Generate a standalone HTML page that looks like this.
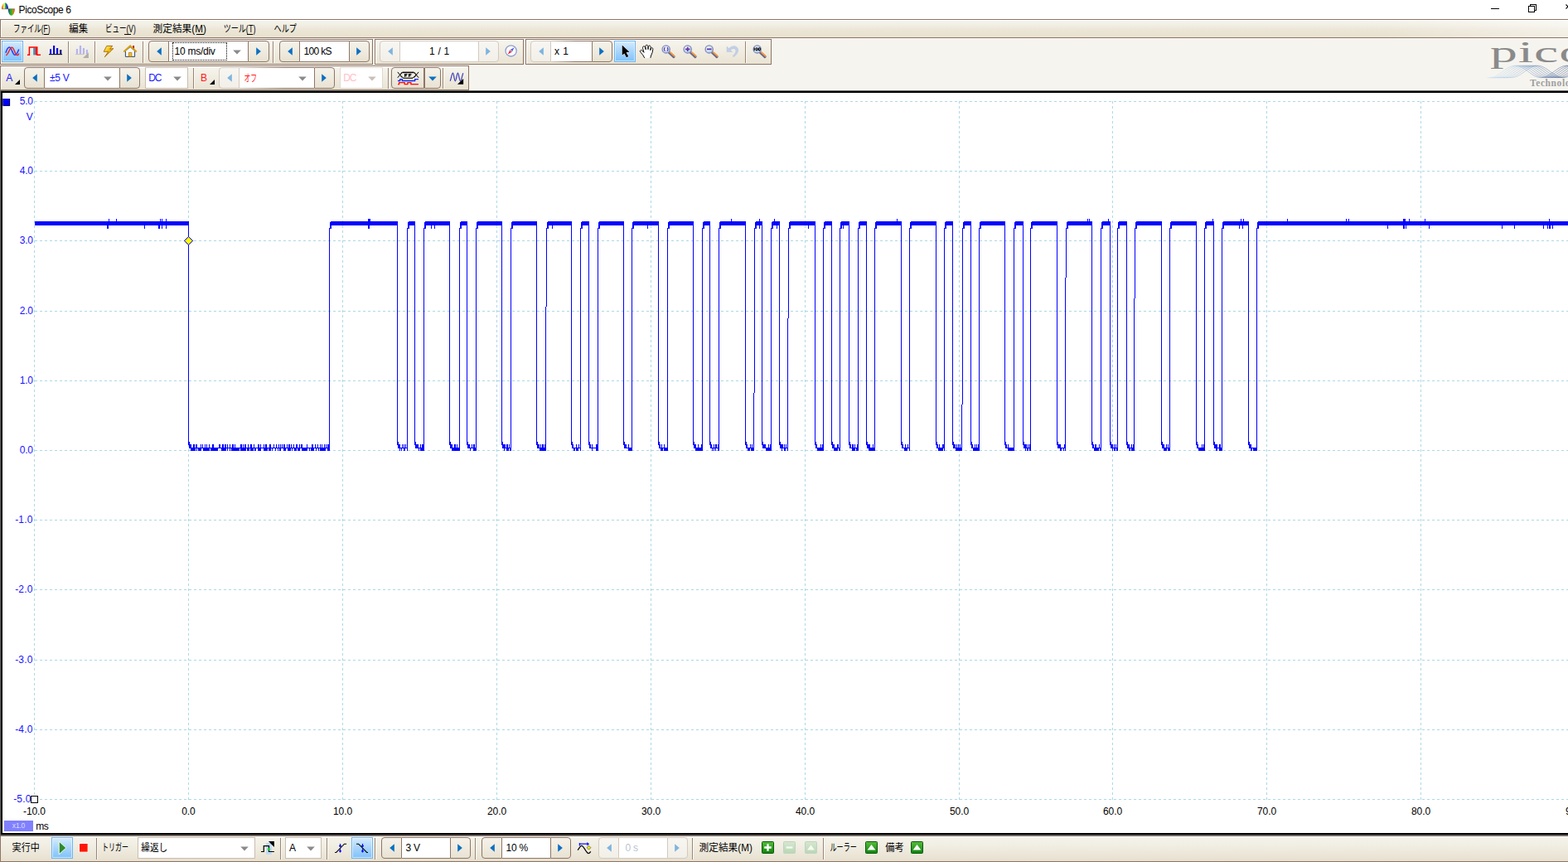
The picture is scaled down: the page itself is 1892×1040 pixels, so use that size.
<!DOCTYPE html><html><head><meta charset="utf-8"><title>PicoScope 6</title><style>*{margin:0;padding:0}
html,body{width:1892px;height:1040px;overflow:hidden;background:#fff}
body{font-family:"Liberation Sans",sans-serif;font-size:12px;color:#000;line-height:14px}
#app{position:relative;width:1892px;height:1040px;overflow:hidden}
#app>*{position:absolute}
svg{display:block;overflow:visible}
#title{left:0;top:0;width:1892px;height:23px;background:#fff}
#title>*{position:absolute}
.tt{left:22.6px;top:5px;font-size:12px;letter-spacing:-.4px;white-space:nowrap}
#menu{left:0;top:23px;width:1891px;height:21px;border:1px solid #8e7565;border-right:0;
 background:linear-gradient(to right,rgba(255,255,255,0) 88%,rgba(255,255,255,.45) 100%),linear-gradient(to bottom,#f6f4ed 0,#f1eee3 30%,#ece6d7 55%,#e9e2d0 88%,#eae6da 100%);box-shadow:inset 1px 1px 0 #fff}
.jp{pointer-events:none}
.jp text{font-family:"Liberation Sans","Noto Sans CJK JP",sans-serif;font-size:12px}
.ul{height:1px;background:#000}
#tbbg{left:0;top:46px;width:1892px;height:63px;background:#f6f4ef}
.tb{border:1px solid #8e7565;background:linear-gradient(to bottom,#f7f5ee 0,#f0ece1 50%,#e9e3d3 100%);box-shadow:inset 1px 1px 0 #fff}
.sep{width:1px;background:#9a8676;box-shadow:1px 0 0 #fbfaf7}
.sel{border:1px solid #6db6f2;background:linear-gradient(to bottom,#d4ebfd 0,#a8d5fb 50%,#7fc2fa 100%);box-shadow:inset 0 0 0 1px rgba(255,255,255,.55)}
.sbl,.sbr{border:1px solid #8f7767;background:linear-gradient(to bottom,#f5f2ea 0,#efebdf 50%,#e8e2d2 100%)}
.sbl{border-radius:4px 0 0 4px}.sbr{border-radius:0 4px 4px 0}
.sbl.d,.sbr.d{border-color:#d2cabf;background:linear-gradient(to bottom,#f8f6f2 0,#f2efe8 100%)}
.fld{background:#fff;border:1px solid #8f7767;border-left:0;border-right:0;white-space:nowrap;line-height:24px;letter-spacing:-.25px;font-size:12px;overflow:hidden}
.fld.fd{border-color:#d2cabf}
.fld.ld{border-image:linear-gradient(to right,#d2cabf 0,#8f7767 60%) 1}
.focus{border:1px dotted #000}
.ar,.ic{pointer-events:none}
.cb{border:1px solid #c9beb0;background:#fff;line-height:24px;white-space:nowrap;letter-spacing:-.25px;overflow:hidden}
.cb.dis{border-color:#e0d9ce}
.t{white-space:nowrap;line-height:14px}
#plot{left:0;top:109px;width:1892px;height:893px;background:#fff;border:3px solid #000;border-right:0;box-shadow:inset 0 0 0 0 #000}
#plotedge{left:0;top:109px;width:1892px;height:899px;border:1px solid #646464;border-right:0;box-sizing:border-box}
#plotsvg{left:0;top:0}
.yl{left:0;width:39.5px;text-align:right;color:#1a14ff;font-size:12px;letter-spacing:-.35px;line-height:14px;white-space:nowrap}
.xl{top:971.5px;width:60px;text-align:center;font-size:12px;line-height:14px;white-space:nowrap;letter-spacing:-.1px}
#zoomf{left:5px;top:990px;width:35px;height:13px;background:#8080ff;color:#dcdcff;font-size:8.5px;line-height:13px;text-align:center;letter-spacing:-.2px}
#status{left:0;top:1008px;width:1891px;height:30px;border-left:1px solid #8e7565;border-top:1px solid #7d6a5c;border-bottom:2px solid #8e7565;
 background:linear-gradient(to bottom,#f6f4ec 0,#efebdf 50%,#e7e0cf 100%);box-shadow:inset 0 1px 0 #fffefa}
#logo{left:1790px;top:46px;width:102px;height:62px;overflow:hidden}
#logo>*{position:absolute}
.pico{left:8.3px;top:-2px;font-family:"Liberation Serif",serif;font-size:35px;line-height:40px;color:#8a8a8a;transform:scaleX(1.88);transform-origin:0 0;letter-spacing:.5px}
.tech{left:56px;top:47px;font-family:"Liberation Serif",serif;font-weight:bold;font-size:11.5px;line-height:14px;color:#9e9e9e;letter-spacing:.6px;white-space:nowrap}
</style></head><body><div id="app"><div id="title"><svg class="ic" style="left:2px;top:3px" width="17" height="17" viewBox="0 0 17 17"><defs><linearGradient id="ga" x1="0" x2="1"><stop offset="0" stop-color="#d80808"/><stop offset=".22" stop-color="#f0c818"/><stop offset=".4" stop-color="#eef8c8"/><stop offset=".56" stop-color="#38b430"/><stop offset=".82" stop-color="#1830c8"/><stop offset="1" stop-color="#101890"/></linearGradient><linearGradient id="gb" x1="0" x2="1"><stop offset="0" stop-color="#1020a8"/><stop offset=".3" stop-color="#20a828"/><stop offset=".6" stop-color="#50b020"/><stop offset=".8" stop-color="#d09010"/><stop offset="1" stop-color="#d81010"/></linearGradient></defs><path d="M0.1 7.8A3.95 7.6 0 0 1 8 7.8z" fill="url(#ga)"/><path d="M7.8 7.8A3.95 8 0 0 0 15.7 7.8z" fill="url(#gb)"/><path d="M0.1 7.8H15.7" stroke="#503030" stroke-width=".6" opacity=".8"/></svg><span class="tt">PicoScope 6</span><svg class="ic" style="left:1790px;top:0" width="102" height="23" viewBox="0 0 102 23" shape-rendering="crispEdges"><path d="M9 10.5h10" stroke="#000" stroke-width="1" fill="none"/><path d="M54.5 7.5h7v7h-7z M56.5 7.5v-2h7v7h-2" stroke="#000" stroke-width="1" fill="none"/><path d="M99.5 5.5l5 5m0 -5l-5 5" stroke="#000" stroke-width="1.1" fill="none" shape-rendering="auto"/></svg></div><div id="menu"></div><svg class="jp" style="left:15.2px;top:25px" width="49" height="20" viewBox="0 -14 49 20"><text x="1" y="0" fill="#000" textLength="44.6" lengthAdjust="spacingAndGlyphs">ファイル(F)</text></svg><svg class="jp" style="left:82.6px;top:25px" width="26" height="20" viewBox="0 -14 26 20"><text x="0.3" y="0" fill="#000" textLength="22.8" lengthAdjust="spacingAndGlyphs">編集</text></svg><svg class="jp" style="left:125.5px;top:25px" width="41" height="20" viewBox="0 -14 41 20"><text x="1" y="0" fill="#000" textLength="36.7" lengthAdjust="spacingAndGlyphs">ビュー(V)</text></svg><svg class="jp" style="left:184.2px;top:25px" width="68" height="20" viewBox="0 -14 68 20"><text x="0.5" y="0" fill="#000" textLength="64.3" lengthAdjust="spacingAndGlyphs">測定結果(M)</text></svg><svg class="jp" style="left:269px;top:25px" width="43" height="20" viewBox="0 -14 43 20"><text x="0.8" y="0" fill="#000" textLength="38.6" lengthAdjust="spacingAndGlyphs">ツール(T)</text></svg><svg class="jp" style="left:330px;top:25px" width="31" height="20" viewBox="0 -14 31 20"><text x="0.6" y="0" fill="#000" textLength="27.3" lengthAdjust="spacingAndGlyphs">ヘルプ</text></svg><i class="ul" style="left:52.5px;top:41px;width:6px"></i><i class="ul" style="left:150px;top:41px;width:7.5px"></i><i class="ul" style="left:236.5px;top:41px;width:9.5px"></i><i class="ul" style="left:298px;top:41px;width:6.5px"></i><div id="tbbg"></div><div class="tb" style="left:0;top:47px;width:448px;height:29px"></div><div class="tb" style="left:452px;top:47px;width:178px;height:29px"></div><div class="tb" style="left:634px;top:47px;width:295px;height:29px"></div><div class="tb" style="left:0;top:79px;width:564px;height:28px"></div><div class="sel" style="left:2px;top:49px;width:24px;height:24px"></div><svg class="ic" style="left:5px;top:54px" width="20" height="16" viewBox="0 0 20 16"><path d="M1.9 9.7C3.2 5.5 4.8 3 6.4 3C9 3 10.2 12.3 12.8 12.3C14.8 12.3 16.4 9 17.8 5.4" fill="none" stroke="#2a3cf0" stroke-width="1.5"/><path d="M2.1 12.6C5 12.6 6.4 3.3 9.3 3.3C12.2 3.3 13 12.6 15.9 12.6C16.8 12.6 17.4 11.6 17.8 10.4" fill="none" stroke="#f02020" stroke-width="1.5"/></svg><svg class="ic" style="left:33px;top:55px" width="16" height="13" viewBox="0 0 16 13"><defs><linearGradient id="gp" x1="0" x2="1"><stop offset="0" stop-color="#28c0f0"/><stop offset="1" stop-color="#e81818"/></linearGradient></defs><rect x="7" y="2.6" width="4.4" height="8.8" fill="url(#gp)"/><path d="M0 11.3H2.4V2H11.7V11.3H16" fill="none" stroke="#ff0000" stroke-width="1.5"/></svg><svg class="ic" style="left:59px;top:54px" width="16" height="13" viewBox="0 0 16 13"><defs><linearGradient id="gbar" x1="0" x2="1"><stop offset="0" stop-color="#0010ff"/><stop offset=".55" stop-color="#0000e0"/><stop offset="1" stop-color="#000070"/></linearGradient></defs><path fill="#fff8d8" opacity=".8" d="M.4 4.6h3.3v7h-3.3zM4.4 .5h3.4v11h-3.4zM8.4 3.4h3.4v8h-3.4zM12.5 5.5h3.4v6h-3.4z"/><path fill="url(#gbar)" d="M1 5.2h2.1v6.3h-2.1zM5 1.1h2.2v10.4h-2.2zM9 4h2.2v7.5h-2.2zM13.1 6.1h2.2v5.4h-2.2z"/><path d="M0 11.6H16" stroke="#101020" stroke-width="1.1"/></svg><i class="sep" style="left:82px;top:50px;height:26px"></i><svg class="ic" style="left:91px;top:54px" width="17" height="16" viewBox="0 0 17 16"><path fill="#b4b4f0" d="M.9 4.9h2.1v6.5h-2.1zM4.9 .9h2.2v10.5h-2.2zM8.9 3.9h2.1v7.5h-2.1zM12.9 6h2v5.4h-2z"/><path d="M0 11.6H10" stroke="#c8c4bc" stroke-width="1"/><path d="M15.9 9.2V15.9H9z" fill="#b2aea6"/></svg><i class="sep" style="left:114px;top:50px;height:26px"></i><svg class="ic" style="left:124px;top:54px" width="14" height="16" viewBox="0 0 14 16"><defs><linearGradient id="gbo" x1="0" y1="0" x2="1" y2="1"><stop offset="0" stop-color="#fff8c0"/><stop offset=".4" stop-color="#f8c818"/><stop offset="1" stop-color="#c07800"/></linearGradient></defs><path d="M4.8 1.4H11.7L8.6 5.2L12.9 4.5L2.4 14.7L6.7 8.3H1.2z" fill="url(#gbo)" stroke="#a06800" stroke-width=".9" stroke-linejoin="round"/></svg><svg class="ic" style="left:149px;top:54px" width="17" height="16" viewBox="0 0 17 16"><path d="M11.2 1.1h1.8v3.8h-1.8z" fill="#c00018"/><path d="M11.2 3.6h1.8v1.6h-1.8z" fill="#181818"/><path d="M2.4 7.5L8.1 2.6L13.6 7.5V14.4H2.4z" fill="#f4f8ff" stroke="#34465e" stroke-width="1"/><path d="M0.3 8.6L8.1 1.3L15.8 8.6" fill="none" stroke="#d8a010" stroke-width="2" stroke-linejoin="miter"/><path d="M6.4 9.4h3.4v4.8h-3.4z" fill="#f0c030" stroke="#b07a08" stroke-width=".8"/></svg><i class="sep" style="left:172px;top:50px;height:26px"></i><b class="sbl" style="left:179px;top:49px;width:23px;height:24px"></b><b class="sbr" style="left:299px;top:49px;width:24px;height:24px"></b><span class="fld" style="left:204px;top:49px;width:95px;height:24px;color:#000;text-indent:6.5px;">10 ms/div</span><svg class="ar" style="left:188.5px;top:56.6px" width="6" height="10" viewBox="0 0 6 10"><path fill="#0a6fc2" d="M5.8 0.3V9.7L0.2 5z"/></svg><svg class="ar" style="left:309.2px;top:56.6px" width="6" height="10" viewBox="0 0 6 10"><path fill="#0a6fc2" d="M0.2 0.3V9.7L5.8 5z"/></svg><svg class="ar" style="left:280.5px;top:59.5px" width="10" height="6" viewBox="0 0 10 6"><path fill="#8a8a8a" d="M0.2 0.4H9.8L5 5.6z"/></svg><div class="focus" style="left:208px;top:51px;width:64px;height:20px"></div><i class="sep" style="left:329px;top:50px;height:26px"></i><b class="sbl" style="left:337px;top:49px;width:23px;height:24px"></b><b class="sbr" style="left:421px;top:49px;width:23px;height:24px"></b><span class="fld" style="left:362px;top:49px;width:59px;height:24px;color:#000;text-indent:4.5px;letter-spacing:-0.65px;">100 kS</span><svg class="ar" style="left:346.5px;top:56.6px" width="6" height="10" viewBox="0 0 6 10"><path fill="#0a6fc2" d="M5.8 0.3V9.7L0.2 5z"/></svg><svg class="ar" style="left:430.2px;top:56.6px" width="6" height="10" viewBox="0 0 6 10"><path fill="#0a6fc2" d="M0.2 0.3V9.7L5.8 5z"/></svg><b class="sbl d" style="left:458px;top:49px;width:23px;height:24px"></b><b class="sbr d" style="left:577px;top:49px;width:23px;height:24px"></b><span class="fld fd" style="left:483px;top:49px;width:94px;height:24px;color:#000;text-align:center;word-spacing:1px;">1 / 1</span><svg class="ar" style="left:467.5px;top:56.6px" width="6" height="10" viewBox="0 0 6 10"><path fill="#7db4e0" d="M5.8 0.3V9.7L0.2 5z"/></svg><svg class="ar" style="left:586.2px;top:56.6px" width="6" height="10" viewBox="0 0 6 10"><path fill="#7db4e0" d="M0.2 0.3V9.7L5.8 5z"/></svg><svg class="ic" style="left:609px;top:54px" width="16" height="16" viewBox="0 0 16 16"><circle cx="7.6" cy="7.4" r="6.6" fill="#fdfdff" stroke="#8ea0d0" stroke-width="1.3"/><path d="M11.6 3.2L8.8 8.6L6.5 6.3z" fill="#4058e0"/><path d="M3.7 11.6L6.5 6.3L8.8 8.6z" fill="#e81828"/><circle cx="7.6" cy="7.4" r=".8" fill="#fff"/></svg><b class="sbl d" style="left:640px;top:49px;width:23px;height:24px"></b><b class="sbr" style="left:714px;top:49px;width:23px;height:24px"></b><span class="fld ld" style="left:665px;top:49px;width:49px;height:24px;color:#000;text-indent:4px;word-spacing:1.5px;">x 1</span><svg class="ar" style="left:649.5px;top:56.6px" width="6" height="10" viewBox="0 0 6 10"><path fill="#7db4e0" d="M5.8 0.3V9.7L0.2 5z"/></svg><svg class="ar" style="left:723.2px;top:56.6px" width="6" height="10" viewBox="0 0 6 10"><path fill="#0a6fc2" d="M0.2 0.3V9.7L5.8 5z"/></svg><div class="sel" style="left:741px;top:49px;width:24px;height:24px"></div><svg class="ic" style="left:750px;top:54px" width="11" height="16" viewBox="0 0 11 16"><path d="M0.7 0.4V12.8L3.3 10.4L5.9 15.2L8.3 14L5.6 9.2L9.5 8.8z" fill="#000" stroke="#fff" stroke-width=".9" paint-order="stroke"/></svg><svg class="ic" style="left:771px;top:54px" width="17" height="17" viewBox="0 0 17 17"><path d="M6.8 15.9L4.6 12.2L2.4 9.6L1.3 7.7C1.5 6.6 2.4 6.2 3.2 6.6L5.2 8.4L6 9.3L4.6 4.4C4.3 3 4.8 2.1 5.7 1.9C6.6 1.7 7.2 2.4 7.5 3.4L8.2 5.8L7.9 1.9C8 0.8 8.6 0.3 9.4 0.3C10.3 0.3 10.8 0.9 10.9 1.9L11 5.6L11.4 2.3C11.6 1.4 12.2 1 12.9 1.1C13.7 1.2 14.2 1.9 14.1 2.8L13.8 6.6L14.5 4.6C14.8 3.8 15.4 3.5 16 3.7C16.7 3.9 16.9 4.6 16.8 5.4L16.2 9.2L14.6 13L13.8 15.9" fill="#fff" stroke="#000" stroke-width=".95" stroke-linejoin="round"/></svg><svg class="ic" style="left:798px;top:54px" width="17" height="17" viewBox="0 0 17 17"><defs><radialGradient id="gm" cx=".4" cy=".35" r=".7"><stop offset="0" stop-color="#f4fbff"/><stop offset="1" stop-color="#a8d0f4"/></radialGradient></defs><path d="M9.2 9.1L15 14.5" stroke="#66668e" stroke-width="3.2" stroke-linecap="round"/><path d="M10.2 8.6L15.7 13.7" stroke="#f29a3a" stroke-width="1.8" stroke-linecap="round"/><circle cx="5.7" cy="5.4" r="4.6" fill="url(#gm)" stroke="#8688b8" stroke-width="1.3"/><path d="M4.5 3.2C3.1 4.2 3.1 6.6 4.5 7.6M6.9 3.2C8.3 4.2 8.3 6.6 6.9 7.6" fill="none" stroke="#5a2898" stroke-width="1.1"/></svg><svg class="ic" style="left:824px;top:54px" width="17" height="17" viewBox="0 0 17 17"><defs><radialGradient id="gm" cx=".4" cy=".35" r=".7"><stop offset="0" stop-color="#f4fbff"/><stop offset="1" stop-color="#a8d0f4"/></radialGradient></defs><path d="M9.2 9.1L15 14.5" stroke="#66668e" stroke-width="3.2" stroke-linecap="round"/><path d="M10.2 8.6L15.7 13.7" stroke="#f29a3a" stroke-width="1.8" stroke-linecap="round"/><circle cx="5.7" cy="5.4" r="4.6" fill="url(#gm)" stroke="#8688b8" stroke-width="1.3"/><path d="M3 5.4H8.4M5.7 2.7V8.1" stroke="#6430a0" stroke-width="1.6"/></svg><svg class="ic" style="left:850px;top:54px" width="17" height="17" viewBox="0 0 17 17"><defs><radialGradient id="gm" cx=".4" cy=".35" r=".7"><stop offset="0" stop-color="#f4fbff"/><stop offset="1" stop-color="#a8d0f4"/></radialGradient></defs><path d="M9.2 9.1L15 14.5" stroke="#66668e" stroke-width="3.2" stroke-linecap="round"/><path d="M10.2 8.6L15.7 13.7" stroke="#f29a3a" stroke-width="1.8" stroke-linecap="round"/><circle cx="5.7" cy="5.4" r="4.6" fill="url(#gm)" stroke="#8688b8" stroke-width="1.3"/><path d="M3 5.3H8.5" stroke="#6430a0" stroke-width="1.7"/></svg><svg class="ic" style="left:876px;top:54px" width="16" height="16" viewBox="0 0 16 16"><path d="M1.1 2.3V8.5H7.5L5.4 6.4C7 4.6 9.6 4 11.2 5.4C12.8 7 11.6 10.6 8 13.6L9.4 14.6C14.4 11 16 6.4 13.6 3.4C11.2 0.6 6.4 1.2 3.6 4.6z" fill="#c2cfe8" stroke="#b4c2de" stroke-width=".5"/></svg><i class="sep" style="left:899px;top:50px;height:26px"></i><svg class="ic" style="left:908px;top:54px" width="17" height="17" viewBox="0 0 17 17"><defs><radialGradient id="gm" cx=".4" cy=".35" r=".7"><stop offset="0" stop-color="#f4fbff"/><stop offset="1" stop-color="#a8d0f4"/></radialGradient></defs><path d="M9.2 9.1L15 14.5" stroke="#66668e" stroke-width="3.2" stroke-linecap="round"/><path d="M10.2 8.6L15.7 13.7" stroke="#f29a3a" stroke-width="1.8" stroke-linecap="round"/><circle cx="5.7" cy="5.4" r="4.6" fill="url(#gm)" stroke="#8688b8" stroke-width="1.3"/><path d="M2.2 3.6V7M3.9 5.3a1.1 1.6 0 1 0 2.2 0a1.1 1.6 0 1 0 -2.2 0M7.2 5.3a1.1 1.6 0 1 0 2.2 0a1.1 1.6 0 1 0 -2.2 0" stroke="#000" stroke-width="1.1" fill="none"/></svg><span class="t" style="left:7.3px;top:86.5px;color:#1a1aff;font-size:12px">A</span><svg class="ic" style="left:18px;top:96px" width="6" height="6"><path d="M6 0V6H0z" fill="#000"/></svg><b class="sbl" style="left:29px;top:81px;width:23px;height:24px"></b><b class="sbr" style="left:144px;top:81px;width:23px;height:24px"></b><span class="fld" style="left:54px;top:81px;width:90px;height:24px;color:#1a1aff;text-indent:6px;">&#177;5 V</span><svg class="ar" style="left:38.5px;top:88.6px" width="6" height="10" viewBox="0 0 6 10"><path fill="#0a6fc2" d="M5.8 0.3V9.7L0.2 5z"/></svg><svg class="ar" style="left:153.2px;top:88.6px" width="6" height="10" viewBox="0 0 6 10"><path fill="#0a6fc2" d="M0.2 0.3V9.7L5.8 5z"/></svg><svg class="ar" style="left:125px;top:91.5px" width="10" height="6" viewBox="0 0 10 6"><path fill="#8a8a8a" d="M0.2 0.4H9.8L5 5.6z"/></svg><div class="cb" style="left:175px;top:81px;width:50px;height:24px;color:#1a1aff;text-indent:3.2px;letter-spacing:-1.2px">DC</div><svg class="ar" style="left:209px;top:91.5px" width="10" height="6" viewBox="0 0 10 6"><path fill="#8a8a8a" d="M0.2 0.4H9.8L5 5.6z"/></svg><i class="sep" style="left:233px;top:82px;height:25px"></i><span class="t" style="left:242px;top:86.5px;color:#ff1a1a;font-size:12px">B</span><svg class="ic" style="left:253px;top:96px" width="6" height="6"><path d="M6 0V6H0z" fill="#000"/></svg><b class="sbl d" style="left:264px;top:81px;width:23px;height:24px"></b><b class="sbr" style="left:379px;top:81px;width:23px;height:24px"></b><span class="fld ld" style="left:289px;top:81px;width:90px;height:24px;color:#000;text-indent:6px;"></span><svg class="ar" style="left:273.5px;top:88.6px" width="6" height="10" viewBox="0 0 6 10"><path fill="#7db4e0" d="M5.8 0.3V9.7L0.2 5z"/></svg><svg class="ar" style="left:388.2px;top:88.6px" width="6" height="10" viewBox="0 0 6 10"><path fill="#0a6fc2" d="M0.2 0.3V9.7L5.8 5z"/></svg><svg class="ar" style="left:359.5px;top:91.5px" width="10" height="6" viewBox="0 0 10 6"><path fill="#8a8a8a" d="M0.2 0.4H9.8L5 5.6z"/></svg><svg class="jp" style="left:294.2px;top:84.5px" width="19" height="20" viewBox="0 -14 19 20"><text x="0.5" y="0" fill="#ff1a1a" textLength="15.5" lengthAdjust="spacingAndGlyphs">オフ</text></svg><div class="cb dis" style="left:410px;top:81px;width:50px;height:24px;color:#ffc0c8;text-indent:3.2px;letter-spacing:-1.2px">DC</div><svg class="ar" style="left:444px;top:91.5px" width="10" height="6" viewBox="0 0 10 6"><path fill="#c8c0b8" d="M0.2 0.4H9.8L5 5.6z"/></svg><i class="sep" style="left:468px;top:82px;height:25px"></i><b class="sbl" style="left:472px;top:81px;width:38px;height:24px"></b><b class="sbr" style="left:512px;top:81px;width:18px;height:24px"></b><svg class="ic" style="left:479px;top:86px" width="27" height="17" viewBox="0 0 27 17"><path d="M1 11.5H3.7V9.6H6.3V11.5H21.7V9.6H25.9" stroke="#fff8d0" stroke-width="2.6" fill="none" opacity=".7"/><path d="M0.8 0.9L6.3 7.8M0.8 7.8L6.3 0.9M20.6 0.9L26.1 7.8M20.6 7.8L26.1 0.9" stroke="#000" stroke-width="1" fill="none"/><path d="M3.5 4.4L7.1 1.2M3.5 4.4L7.9 8.3M23.3 4.4L19.8 1.2M23.3 4.4L18.7 8.3" stroke="#000" stroke-width=".9" fill="none"/><path d="M6.8 1.4H20.1" stroke="#000" stroke-width="1.5" fill="none"/><path d="M7.6 8.2H19" stroke="#000" stroke-width="1.1" fill="none"/><path d="M9.6 6.7V3.6H12.5M9.6 5.2H11.9M14.5 6.7V3.6H17.4M14.5 5.2H16.8" stroke="#000" stroke-width="1.15" fill="none"/><path d="M1 11.5H3.7V9.6H6.3V11.5H21.7V9.6H25.9" stroke="#0820ff" stroke-width="1.3" fill="none"/><path d="M1 15.7H2.6V13.6H9.2V15.7H12.9V13.6H16.9V15.7H25.9" stroke="#ff0808" stroke-width="1.3" fill="none"/></svg><svg class="ar" style="left:516.6px;top:92px" width="10" height="6" viewBox="0 0 10 6"><path fill="#0a6fc2" d="M0.2 0.4H9.8L5 5.6z"/></svg><i class="sep" style="left:534px;top:82px;height:25px"></i><svg class="ic" style="left:542px;top:87px" width="18" height="16" viewBox="0 0 18 16"><path d="M1.2 10.8C2.4 7.5 3.4 1.2 4.4 1.2C5.6 1.2 6.2 10.8 7.3 10.8C8.5 10.8 9.3 1.2 10.4 1.2C11.6 1.2 12.3 10.8 13.4 10.8C14.6 10.8 15.6 4.5 16.8 1.2" fill="none" stroke="#3a3ab8" stroke-width="1.2"/><path d="M17.1 8.1V14.7H9.9z" fill="#000"/></svg><div id="plot"></div><div id="plotedge"></div><svg id="plotsvg" width="1892" height="1040" viewBox="0 0 1892 1040" shape-rendering="crispEdges"><g stroke="#add8e6" stroke-width="1" stroke-dasharray="3 3" fill="none"><path d="M41.5 122V965"/><path d="M227.5 122V965"/><path d="M413.5 122V965"/><path d="M599.5 122V965"/><path d="M785.5 122V965"/><path d="M971.5 122V965"/><path d="M1157.5 122V965"/><path d="M1342.5 122V965"/><path d="M1528.5 122V965"/><path d="M1714.5 122V965"/><path d="M42 122.5H1892"/><path d="M42 206.5H1892"/><path d="M42 290.5H1892"/><path d="M42 375.5H1892"/><path d="M42 459.5H1892"/><path d="M42 543.5H1892"/><path d="M42 627.5H1892"/><path d="M42 711.5H1892"/><path d="M42 796.5H1892"/><path d="M42 880.5H1892"/><path d="M42 964.5H1892"/></g><path fill="#0000ff" d="M42 267h186v5h-186zM227 267h1v270h-1zM228 533h1v4h-1zM228 536h1v5h-1zM229 536h1v5h-1zM230 536h1v8h-1zM231 540h1v4h-1zM232 540h1v4h-1zM233 536h1v8h-1zM234 536h1v8h-1zM235 540h1v4h-1zM236 536h1v5h-1zM237 536h1v8h-1zM238 540h1v1h-1zM239 540h1v4h-1zM240 540h1v4h-1zM241 540h1v4h-1zM242 536h1v8h-1zM243 540h1v1h-1zM244 536h1v5h-1zM245 540h1v4h-1zM246 540h1v4h-1zM247 536h1v8h-1zM248 540h1v4h-1zM249 536h1v8h-1zM250 540h1v4h-1zM251 540h1v4h-1zM252 536h1v8h-1zM253 540h1v1h-1zM254 540h1v4h-1zM255 540h1v4h-1zM256 536h1v8h-1zM257 536h1v8h-1zM258 540h1v4h-1zM259 540h1v4h-1zM260 540h1v4h-1zM261 540h1v4h-1zM262 540h1v4h-1zM263 540h1v1h-1zM264 536h1v5h-1zM265 536h1v5h-1zM266 540h1v1h-1zM267 540h1v4h-1zM268 536h1v8h-1zM269 536h1v8h-1zM270 540h1v4h-1zM271 536h1v8h-1zM272 536h1v8h-1zM273 540h1v1h-1zM274 536h1v8h-1zM275 540h1v1h-1zM276 540h1v1h-1zM277 536h1v8h-1zM278 540h1v1h-1zM279 540h1v4h-1zM280 536h1v8h-1zM281 536h1v8h-1zM282 540h1v4h-1zM283 536h1v8h-1zM284 540h1v4h-1zM285 540h1v4h-1zM286 540h1v4h-1zM287 540h1v4h-1zM288 540h1v4h-1zM289 540h1v1h-1zM290 536h1v8h-1zM291 536h1v8h-1zM292 540h1v4h-1zM293 536h1v8h-1zM294 540h1v4h-1zM295 536h1v8h-1zM296 536h1v8h-1zM297 540h1v1h-1zM298 540h1v4h-1zM299 536h1v8h-1zM300 540h1v4h-1zM301 540h1v1h-1zM302 536h1v8h-1zM303 536h1v8h-1zM304 540h1v4h-1zM305 540h1v4h-1zM306 536h1v5h-1zM307 540h1v4h-1zM308 540h1v4h-1zM309 540h1v1h-1zM310 540h1v1h-1zM311 536h1v8h-1zM312 536h1v8h-1zM313 540h1v4h-1zM314 536h1v8h-1zM315 540h1v1h-1zM316 540h1v1h-1zM317 540h1v1h-1zM318 536h1v8h-1zM319 540h1v4h-1zM320 536h1v8h-1zM321 536h1v8h-1zM322 540h1v4h-1zM323 540h1v1h-1zM324 540h1v4h-1zM325 536h1v8h-1zM326 536h1v8h-1zM327 540h1v1h-1zM328 540h1v4h-1zM329 540h1v1h-1zM330 536h1v5h-1zM331 540h1v1h-1zM332 540h1v4h-1zM333 536h1v5h-1zM334 540h1v1h-1zM335 540h1v4h-1zM336 536h1v5h-1zM337 540h1v4h-1zM338 536h1v8h-1zM339 540h1v1h-1zM340 536h1v5h-1zM341 540h1v1h-1zM342 536h1v8h-1zM343 536h1v8h-1zM344 540h1v4h-1zM345 540h1v1h-1zM346 536h1v5h-1zM347 540h1v4h-1zM348 536h1v8h-1zM349 536h1v8h-1zM350 540h1v4h-1zM351 536h1v5h-1zM352 540h1v4h-1zM353 540h1v1h-1zM354 536h1v5h-1zM355 540h1v4h-1zM356 540h1v4h-1zM357 536h1v8h-1zM358 536h1v5h-1zM359 540h1v4h-1zM360 540h1v4h-1zM361 536h1v8h-1zM362 540h1v1h-1zM363 536h1v5h-1zM364 536h1v8h-1zM365 540h1v4h-1zM366 540h1v4h-1zM367 540h1v4h-1zM368 540h1v4h-1zM369 540h1v4h-1zM370 536h1v8h-1zM371 540h1v1h-1zM372 540h1v1h-1zM373 540h1v4h-1zM374 540h1v1h-1zM375 540h1v4h-1zM376 536h1v8h-1zM377 536h1v8h-1zM378 540h1v4h-1zM379 540h1v1h-1zM380 536h1v5h-1zM381 540h1v4h-1zM382 540h1v1h-1zM383 536h1v5h-1zM384 540h1v4h-1zM385 540h1v1h-1zM386 536h1v8h-1zM387 540h1v4h-1zM388 536h1v8h-1zM389 540h1v4h-1zM390 540h1v4h-1zM391 536h1v8h-1zM392 540h1v4h-1zM393 536h1v5h-1zM394 540h1v1h-1zM395 536h1v8h-1zM396 536h1v8h-1zM228 540h169v1h-169zM397 275h1v269h-1zM398 270h1v6h-1zM398 268h1v2h-1zM399 272h1v4h-1zM399 267h81v5h-81zM479 267h1v270h-1zM480 533h1v4h-1zM480 536h1v5h-1zM481 536h1v5h-1zM482 536h1v8h-1zM483 540h1v1h-1zM484 540h1v4h-1zM485 536h1v5h-1zM486 540h1v1h-1zM487 536h1v8h-1zM488 540h1v4h-1zM489 536h1v5h-1zM490 540h1v1h-1zM480 540h11v1h-11zM491 275h1v269h-1zM492 270h1v6h-1zM492 268h1v2h-1zM493 272h1v4h-1zM493 267h8v5h-8zM500 267h1v270h-1zM501 533h1v4h-1zM501 536h1v5h-1zM502 536h1v5h-1zM503 536h1v5h-1zM504 536h1v5h-1zM505 540h1v4h-1zM506 540h1v1h-1zM507 536h1v8h-1zM508 540h1v4h-1zM509 536h1v8h-1zM510 536h1v8h-1zM501 540h10v1h-10zM511 275h1v269h-1zM512 270h1v6h-1zM512 268h1v2h-1zM513 272h1v4h-1zM513 267h30v5h-30zM542 267h1v270h-1zM543 533h1v4h-1zM543 536h1v5h-1zM544 536h1v5h-1zM545 536h1v8h-1zM546 540h1v4h-1zM547 540h1v4h-1zM548 536h1v8h-1zM549 536h1v8h-1zM550 540h1v4h-1zM551 536h1v8h-1zM552 540h1v4h-1zM553 540h1v4h-1zM543 540h11v1h-11zM554 275h1v269h-1zM555 270h1v6h-1zM555 268h1v2h-1zM556 272h1v4h-1zM556 267h8v5h-8zM563 267h1v270h-1zM564 533h1v4h-1zM564 536h1v5h-1zM565 536h1v5h-1zM566 536h1v5h-1zM567 540h1v4h-1zM568 540h1v1h-1zM569 536h1v5h-1zM570 540h1v1h-1zM571 536h1v8h-1zM572 536h1v8h-1zM573 540h1v4h-1zM564 540h10v1h-10zM574 275h1v269h-1zM575 270h1v6h-1zM575 268h1v2h-1zM576 272h1v4h-1zM576 267h30v5h-30zM605 267h1v270h-1zM606 533h1v4h-1zM606 536h1v5h-1zM607 536h1v5h-1zM608 536h1v8h-1zM609 536h1v5h-1zM610 540h1v1h-1zM611 536h1v8h-1zM612 536h1v8h-1zM613 540h1v4h-1zM614 536h1v5h-1zM615 540h1v4h-1zM606 540h10v1h-10zM616 275h1v269h-1zM617 270h1v6h-1zM617 268h1v2h-1zM618 272h1v4h-1zM618 267h30v5h-30zM647 267h1v270h-1zM648 533h1v4h-1zM648 536h1v5h-1zM649 536h1v5h-1zM650 536h1v5h-1zM651 540h1v4h-1zM652 536h1v8h-1zM653 540h1v4h-1zM654 536h1v8h-1zM655 536h1v8h-1zM656 540h1v4h-1zM657 536h1v8h-1zM658 540h1v4h-1zM648 540h11v1h-11zM659 275h1v95h-1zM658 370h1v174h-1zM660 270h1v6h-1zM660 268h1v2h-1zM661 272h1v4h-1zM661 267h29v5h-29zM689 267h1v270h-1zM690 533h1v4h-1zM690 536h1v5h-1zM691 536h1v5h-1zM692 540h1v4h-1zM693 540h1v4h-1zM694 540h1v1h-1zM695 536h1v8h-1zM696 540h1v4h-1zM697 540h1v4h-1zM698 536h1v5h-1zM699 540h1v1h-1zM690 540h10v1h-10zM700 275h1v269h-1zM701 270h1v6h-1zM701 268h1v2h-1zM702 272h1v4h-1zM702 267h9v5h-9zM710 267h1v270h-1zM711 533h1v4h-1zM711 536h1v5h-1zM712 536h1v5h-1zM713 540h1v1h-1zM714 536h1v8h-1zM715 540h1v1h-1zM716 540h1v1h-1zM717 540h1v1h-1zM718 540h1v1h-1zM719 536h1v8h-1zM720 536h1v8h-1zM711 540h10v1h-10zM721 275h1v269h-1zM722 270h1v6h-1zM722 268h1v2h-1zM723 272h1v4h-1zM723 267h30v5h-30zM752 267h1v270h-1zM753 533h1v4h-1zM753 536h1v5h-1zM754 536h1v5h-1zM755 536h1v5h-1zM756 540h1v1h-1zM757 540h1v1h-1zM758 536h1v8h-1zM759 540h1v4h-1zM760 540h1v4h-1zM761 540h1v4h-1zM753 540h9v1h-9zM762 275h1v269h-1zM763 270h1v6h-1zM763 268h1v2h-1zM764 272h1v4h-1zM764 267h31v5h-31zM794 267h1v270h-1zM795 533h1v4h-1zM795 536h1v5h-1zM796 536h1v5h-1zM797 540h1v4h-1zM798 536h1v8h-1zM799 540h1v4h-1zM800 540h1v1h-1zM801 536h1v8h-1zM802 540h1v4h-1zM803 540h1v4h-1zM804 540h1v4h-1zM795 540h10v1h-10zM805 275h1v269h-1zM806 270h1v6h-1zM806 268h1v2h-1zM807 272h1v4h-1zM807 267h30v5h-30zM836 267h1v270h-1zM837 533h1v4h-1zM837 536h1v5h-1zM838 536h1v5h-1zM839 536h1v8h-1zM840 540h1v4h-1zM841 540h1v4h-1zM842 536h1v8h-1zM843 540h1v4h-1zM844 540h1v4h-1zM845 540h1v4h-1zM846 536h1v8h-1zM837 540h10v1h-10zM847 275h1v269h-1zM848 270h1v6h-1zM848 268h1v2h-1zM849 272h1v4h-1zM849 267h8v5h-8zM856 267h1v270h-1zM857 533h1v4h-1zM857 536h1v5h-1zM858 536h1v5h-1zM859 540h1v4h-1zM860 540h1v1h-1zM861 536h1v8h-1zM862 540h1v1h-1zM863 536h1v8h-1zM864 536h1v5h-1zM865 540h1v1h-1zM866 536h1v8h-1zM857 540h10v1h-10zM867 275h1v269h-1zM868 270h1v6h-1zM868 268h1v2h-1zM869 272h1v4h-1zM869 267h31v5h-31zM899 267h1v270h-1zM900 533h1v4h-1zM900 536h1v5h-1zM901 536h1v5h-1zM902 540h1v4h-1zM903 540h1v4h-1zM904 540h1v4h-1zM905 536h1v5h-1zM906 540h1v4h-1zM907 536h1v8h-1zM908 540h1v4h-1zM909 536h1v8h-1zM900 540h10v1h-10zM910 275h1v199h-1zM909 474h1v70h-1zM911 270h1v6h-1zM911 268h1v2h-1zM912 272h1v4h-1zM912 267h8v5h-8zM919 267h1v270h-1zM920 533h1v4h-1zM920 536h1v5h-1zM921 536h1v5h-1zM922 536h1v5h-1zM923 536h1v5h-1zM924 540h1v4h-1zM925 540h1v4h-1zM926 540h1v4h-1zM927 536h1v8h-1zM928 540h1v4h-1zM929 536h1v8h-1zM920 540h10v1h-10zM930 275h1v269h-1zM931 270h1v6h-1zM931 268h1v2h-1zM932 272h1v4h-1zM932 267h9v5h-9zM940 267h1v270h-1zM941 533h1v4h-1zM941 536h1v5h-1zM942 536h1v5h-1zM943 536h1v8h-1zM944 536h1v5h-1zM945 540h1v1h-1zM946 536h1v8h-1zM947 540h1v4h-1zM948 536h1v5h-1zM949 540h1v1h-1zM950 540h1v1h-1zM941 540h10v1h-10zM951 275h1v109h-1zM950 384h1v160h-1zM952 270h1v6h-1zM952 268h1v2h-1zM953 272h1v4h-1zM953 267h31v5h-31zM983 267h1v270h-1zM984 533h1v4h-1zM984 536h1v5h-1zM985 536h1v5h-1zM986 540h1v4h-1zM987 540h1v4h-1zM988 540h1v4h-1zM989 540h1v4h-1zM990 536h1v8h-1zM991 540h1v4h-1zM992 536h1v8h-1zM984 540h9v1h-9zM993 275h1v269h-1zM994 270h1v6h-1zM994 268h1v2h-1zM995 272h1v4h-1zM995 267h9v5h-9zM1003 267h1v270h-1zM1004 533h1v4h-1zM1004 536h1v5h-1zM1005 536h1v5h-1zM1006 536h1v8h-1zM1007 540h1v4h-1zM1008 540h1v4h-1zM1009 540h1v4h-1zM1010 536h1v8h-1zM1011 536h1v5h-1zM1012 540h1v4h-1zM1004 540h9v1h-9zM1013 275h1v269h-1zM1014 270h1v6h-1zM1014 268h1v2h-1zM1015 272h1v4h-1zM1015 267h10v5h-10zM1024 267h1v270h-1zM1025 533h1v4h-1zM1025 536h1v5h-1zM1026 536h1v5h-1zM1027 540h1v1h-1zM1028 536h1v8h-1zM1029 536h1v8h-1zM1030 540h1v4h-1zM1031 536h1v8h-1zM1032 540h1v1h-1zM1033 540h1v4h-1zM1034 536h1v8h-1zM1025 540h10v1h-10zM1035 275h1v269h-1zM1036 270h1v6h-1zM1036 268h1v2h-1zM1037 272h1v4h-1zM1037 267h9v5h-9zM1045 267h1v270h-1zM1046 533h1v4h-1zM1046 536h1v5h-1zM1047 536h1v5h-1zM1048 536h1v8h-1zM1049 536h1v8h-1zM1050 540h1v4h-1zM1051 540h1v4h-1zM1052 540h1v4h-1zM1053 536h1v8h-1zM1054 540h1v4h-1zM1046 540h9v1h-9zM1055 275h1v269h-1zM1056 270h1v6h-1zM1056 268h1v2h-1zM1057 272h1v4h-1zM1057 267h31v5h-31zM1087 267h1v270h-1zM1088 533h1v4h-1zM1088 536h1v5h-1zM1089 536h1v5h-1zM1090 540h1v1h-1zM1091 540h1v4h-1zM1092 536h1v8h-1zM1093 540h1v4h-1zM1094 540h1v4h-1zM1095 536h1v5h-1zM1096 540h1v1h-1zM1088 540h9v1h-9zM1097 275h1v269h-1zM1098 270h1v6h-1zM1098 268h1v2h-1zM1099 272h1v4h-1zM1099 267h31v5h-31zM1129 267h1v270h-1zM1130 533h1v4h-1zM1130 536h1v5h-1zM1131 536h1v5h-1zM1132 540h1v4h-1zM1133 536h1v8h-1zM1134 540h1v4h-1zM1135 540h1v4h-1zM1136 540h1v4h-1zM1137 536h1v8h-1zM1138 536h1v5h-1zM1130 540h9v1h-9zM1139 275h1v269h-1zM1140 270h1v6h-1zM1140 268h1v2h-1zM1141 272h1v4h-1zM1141 267h9v5h-9zM1149 267h1v270h-1zM1150 533h1v4h-1zM1150 536h1v5h-1zM1151 536h1v5h-1zM1152 536h1v5h-1zM1153 540h1v4h-1zM1154 536h1v8h-1zM1155 540h1v4h-1zM1156 536h1v8h-1zM1157 540h1v4h-1zM1158 536h1v8h-1zM1159 540h1v4h-1zM1160 536h1v8h-1zM1150 540h11v1h-11zM1161 275h1v213h-1zM1160 488h1v56h-1zM1162 270h1v6h-1zM1162 268h1v2h-1zM1163 272h1v4h-1zM1163 267h9v5h-9zM1171 267h1v270h-1zM1172 533h1v4h-1zM1172 536h1v5h-1zM1173 536h1v5h-1zM1174 540h1v4h-1zM1175 540h1v4h-1zM1176 536h1v8h-1zM1177 540h1v4h-1zM1178 536h1v8h-1zM1179 540h1v4h-1zM1180 536h1v8h-1zM1172 540h9v1h-9zM1181 275h1v269h-1zM1182 270h1v6h-1zM1182 268h1v2h-1zM1183 272h1v4h-1zM1183 267h30v5h-30zM1212 267h1v270h-1zM1213 533h1v4h-1zM1213 536h1v5h-1zM1214 536h1v5h-1zM1215 540h1v1h-1zM1216 536h1v8h-1zM1217 540h1v4h-1zM1218 540h1v4h-1zM1219 540h1v4h-1zM1220 540h1v4h-1zM1221 540h1v4h-1zM1222 540h1v4h-1zM1213 540h10v1h-10zM1223 275h1v269h-1zM1224 270h1v6h-1zM1224 268h1v2h-1zM1225 272h1v4h-1zM1225 267h10v5h-10zM1234 267h1v270h-1zM1235 533h1v4h-1zM1235 536h1v5h-1zM1236 536h1v5h-1zM1237 536h1v8h-1zM1238 536h1v5h-1zM1239 540h1v4h-1zM1240 536h1v8h-1zM1241 540h1v1h-1zM1242 536h1v8h-1zM1235 540h8v1h-8zM1243 275h1v269h-1zM1244 270h1v6h-1zM1244 268h1v2h-1zM1245 272h1v4h-1zM1245 267h31v5h-31zM1275 267h1v270h-1zM1276 533h1v4h-1zM1276 536h1v5h-1zM1277 536h1v5h-1zM1278 536h1v5h-1zM1279 536h1v8h-1zM1280 540h1v4h-1zM1281 540h1v1h-1zM1282 540h1v1h-1zM1283 540h1v4h-1zM1284 536h1v5h-1zM1285 540h1v4h-1zM1276 540h10v1h-10zM1286 275h1v60h-1zM1285 335h1v209h-1zM1287 270h1v6h-1zM1287 268h1v2h-1zM1288 272h1v4h-1zM1288 267h30v5h-30zM1317 267h1v270h-1zM1318 533h1v4h-1zM1318 536h1v5h-1zM1319 536h1v5h-1zM1320 540h1v4h-1zM1321 536h1v8h-1zM1322 536h1v8h-1zM1323 540h1v4h-1zM1324 540h1v4h-1zM1325 540h1v4h-1zM1326 536h1v5h-1zM1327 540h1v4h-1zM1318 540h10v1h-10zM1328 275h1v269h-1zM1329 270h1v6h-1zM1329 268h1v2h-1zM1330 272h1v4h-1zM1330 267h10v5h-10zM1339 267h1v270h-1zM1340 533h1v4h-1zM1340 536h1v5h-1zM1341 536h1v5h-1zM1342 536h1v8h-1zM1343 540h1v1h-1zM1344 536h1v8h-1zM1345 540h1v4h-1zM1346 536h1v5h-1zM1347 540h1v4h-1zM1340 540h8v1h-8zM1348 275h1v269h-1zM1349 270h1v6h-1zM1349 268h1v2h-1zM1350 272h1v4h-1zM1350 267h10v5h-10zM1359 267h1v270h-1zM1360 533h1v4h-1zM1360 536h1v5h-1zM1361 536h1v5h-1zM1362 536h1v8h-1zM1363 540h1v4h-1zM1364 540h1v1h-1zM1365 536h1v8h-1zM1366 540h1v4h-1zM1367 536h1v8h-1zM1368 540h1v4h-1zM1360 540h9v1h-9zM1369 275h1v85h-1zM1368 360h1v184h-1zM1370 270h1v6h-1zM1370 268h1v2h-1zM1371 272h1v4h-1zM1371 267h31v5h-31zM1401 267h1v270h-1zM1402 533h1v4h-1zM1402 536h1v5h-1zM1403 536h1v5h-1zM1404 536h1v8h-1zM1405 540h1v4h-1zM1406 540h1v4h-1zM1407 536h1v8h-1zM1408 540h1v1h-1zM1409 536h1v8h-1zM1410 540h1v4h-1zM1402 540h9v1h-9zM1411 275h1v269h-1zM1412 270h1v6h-1zM1412 268h1v2h-1zM1413 272h1v4h-1zM1413 267h31v5h-31zM1443 267h1v270h-1zM1444 533h1v4h-1zM1444 536h1v5h-1zM1445 536h1v5h-1zM1446 540h1v4h-1zM1447 540h1v4h-1zM1448 540h1v4h-1zM1449 540h1v4h-1zM1450 536h1v8h-1zM1451 540h1v4h-1zM1452 536h1v8h-1zM1444 540h9v1h-9zM1453 275h1v269h-1zM1454 270h1v6h-1zM1454 268h1v2h-1zM1455 272h1v4h-1zM1455 267h10v5h-10zM1464 267h1v270h-1zM1465 533h1v4h-1zM1465 536h1v5h-1zM1466 536h1v5h-1zM1467 536h1v8h-1zM1468 536h1v8h-1zM1469 540h1v1h-1zM1470 540h1v1h-1zM1471 536h1v8h-1zM1472 536h1v8h-1zM1473 540h1v4h-1zM1465 540h9v1h-9zM1474 275h1v269h-1zM1475 270h1v6h-1zM1475 268h1v2h-1zM1476 272h1v4h-1zM1476 267h31v5h-31zM1506 267h1v270h-1zM1507 533h1v4h-1zM1507 536h1v5h-1zM1508 536h1v5h-1zM1509 536h1v8h-1zM1510 540h1v4h-1zM1511 540h1v1h-1zM1512 540h1v4h-1zM1513 540h1v4h-1zM1514 540h1v4h-1zM1515 540h1v4h-1zM1507 540h9v1h-9zM1516 275h1v269h-1zM1517 270h1v6h-1zM1517 268h1v2h-1zM1518 272h1v4h-1zM1518 267h374v5h-374zM129 272h2v4h-2zM131 264h1v3h-1zM140 264h1v3h-1zM174 272h1v4h-1zM191 272h2v4h-2zM193 264h1v3h-1zM195 264h1v3h-1zM195 272h1v4h-1zM200 264h1v3h-1zM200 272h1v4h-1zM444 264h3v3h-3zM444 272h2v4h-2zM520 272h1v4h-1zM524 272h1v4h-1zM666 272h1v4h-1zM781 272h1v4h-1zM882 264h1v3h-1zM916 264h1v3h-1zM916 272h1v4h-1zM934 264h1v3h-1zM937 272h1v4h-1zM975 272h1v4h-1zM1017 272h1v4h-1zM1082 264h1v3h-1zM1312 264h1v3h-1zM1314 264h1v3h-1zM1337 264h1v3h-1zM1463 264h1v3h-1zM1495 272h1v4h-1zM1497 264h1v3h-1zM1499 272h1v4h-1zM1500 264h1v3h-1zM1553 264h1v3h-1zM1624 264h1v3h-1zM1627 264h1v3h-1zM1674 272h1v4h-1zM1693 264h3v3h-3zM1693 272h2v4h-2zM1696 272h1v4h-1zM1700 264h1v3h-1zM1719 264h1v3h-1zM1724 272h1v4h-1zM1812 272h1v4h-1zM1827 272h1v4h-1zM1862 272h1v4h-1zM1867 272h1v4h-1zM1869 272h2v4h-2zM1869 264h1v3h-1zM1873 272h1v4h-1z"/><path d="M227.5 285.5l5 5l-5 5l-5 -5z" fill="#ffff00" stroke="#0000ff" stroke-width="1" shape-rendering="crispEdges"/><rect x="3.5" y="119.2" width="8.6" height="8.7" fill="#000" shape-rendering="auto"/><rect x="3.5" y="119.2" width="7.9" height="8" fill="#0000ff" shape-rendering="auto"/><rect x="37.5" y="960.5" width="8" height="8" fill="#fff" stroke="#000" stroke-width="1"/></svg><div class="yl" style="top:115px">5.0</div><div class="yl" style="top:199px">4.0</div><div class="yl" style="top:283px">3.0</div><div class="yl" style="top:368px">2.0</div><div class="yl" style="top:452px">1.0</div><div class="yl" style="top:536px">0.0</div><div class="yl" style="top:620px;letter-spacing:.15px">-1.0</div><div class="yl" style="top:704px;letter-spacing:.15px">-2.0</div><div class="yl" style="top:789px;letter-spacing:.15px">-3.0</div><div class="yl" style="top:873px;letter-spacing:.15px">-4.0</div><div class="yl" style="top:957px;letter-spacing:.15px;width:37.5px">-5.0</div><div class="yl" style="top:134px">V</div><div class="xl" style="left:11.5px">-10.0</div><div class="xl" style="left:197.5px">0.0</div><div class="xl" style="left:383.5px">10.0</div><div class="xl" style="left:569.5px">20.0</div><div class="xl" style="left:755.5px">30.0</div><div class="xl" style="left:941.5px">40.0</div><div class="xl" style="left:1127.5px">50.0</div><div class="xl" style="left:1312.5px">60.0</div><div class="xl" style="left:1498.5px">70.0</div><div class="xl" style="left:1684.5px">80.0</div><div class="xl" style="left:1889px;text-align:left;width:40px">90.0</div><div id="zoomf">x1.0</div><span class="t" style="left:43.3px;top:990px;letter-spacing:-.6px">ms</span><div id="status"></div><svg class="jp" style="left:14px;top:1013px" width="37" height="20" viewBox="0 -14 37 20"><text x="0.6" y="0" fill="#000" textLength="33.2" lengthAdjust="spacingAndGlyphs">実行中</text></svg><div class="sel" style="left:62px;top:1010px;width:24px;height:24px"></div><svg class="ic" style="left:70px;top:1014px" width="11" height="18" viewBox="0 0 11 18"><path d="M1.2 1V16.9L9.8 9z" fill="#2e8a2e" stroke="#f4fff4" stroke-width="1" stroke-linejoin="round"/></svg><svg class="ic" style="left:95px;top:1017px" width="12" height="12" viewBox="0 0 12 12"><rect x="0.5" y="0.5" width="10.6" height="10.6" fill="#ff1600" stroke="#fff" stroke-width=".9"/></svg><i class="sep" style="left:116px;top:1011px;height:26px"></i><svg class="jp" style="left:122px;top:1013px" width="36" height="20" viewBox="0 -14 36 20"><text x="1" y="0" fill="#000" textLength="32" lengthAdjust="spacingAndGlyphs">トリガー</text></svg><div class="cb" style="left:166px;top:1010px;width:140px;height:24px;color:#000;text-indent:4px;"></div><svg class="ar" style="left:289.5px;top:1020.5px" width="10" height="6" viewBox="0 0 10 6"><path fill="#8a8a8a" d="M0.2 0.4H9.8L5 5.6z"/></svg><svg class="jp" style="left:170px;top:1013px" width="35" height="20" viewBox="0 -14 35 20"><text x="0.3" y="0" fill="#000" textLength="32" lengthAdjust="spacingAndGlyphs">繰返し</text></svg><svg class="ic" style="left:314px;top:1015px" width="18" height="17" viewBox="0 0 18 17"><rect x="7.2" y="2" width="6.6" height="13.8" fill="#c0d8f8"/><path d="M1 12.5H4.3V5.6H10.5V12.5H16.9" fill="none" stroke="#000" stroke-width="1.2"/><circle cx="10.4" cy="9.4" r="1.5" fill="#08dc10"/><path d="M10 0.1H16.9V7z" fill="#000"/></svg><i class="sep" style="left:338px;top:1011px;height:26px"></i><div class="cb" style="left:344px;top:1010px;width:42px;height:24px;color:#000;text-indent:4px;">A</div><svg class="ar" style="left:369.5px;top:1020.5px" width="10" height="6" viewBox="0 0 10 6"><path fill="#8a8a8a" d="M0.2 0.4H9.8L5 5.6z"/></svg><i class="sep" style="left:394px;top:1011px;height:26px"></i><svg class="ic" style="left:404px;top:1016px" width="15" height="14" viewBox="0 0 15 14"><path d="M6.5 2V6.3M5 4.6H8M6.5 8.2V12.5M5 10.8H8" fill="none" stroke="#0808ff" stroke-width="1.2"/><path d="M0 12.5H1.7L11.5 2.2H14.1" fill="none" stroke="#000" stroke-width="1.1"/></svg><div class="sel" style="left:424px;top:1010px;width:24px;height:24px"></div><svg class="ic" style="left:430px;top:1016px" width="15" height="14" viewBox="0 0 15 14"><path d="M7.5 2V6.3M6 4.6H9M7.5 8.2V12.5M6 10.8H9" fill="none" stroke="#0808ff" stroke-width="1.2"/><path d="M0 2.2H2.6L12.6 12.5H14" fill="none" stroke="#000" stroke-width="1.1"/></svg><i class="sep" style="left:452px;top:1011px;height:26px"></i><b class="sbl" style="left:460px;top:1010px;width:23px;height:24px"></b><b class="sbr" style="left:543px;top:1010px;width:23px;height:24px"></b><span class="fld" style="left:485px;top:1010px;width:58px;height:24px;color:#000;text-indent:4.5px;">3 V</span><svg class="ar" style="left:469.5px;top:1017.6px" width="6" height="10" viewBox="0 0 6 10"><path fill="#0a6fc2" d="M5.8 0.3V9.7L0.2 5z"/></svg><svg class="ar" style="left:552.2px;top:1017.6px" width="6" height="10" viewBox="0 0 6 10"><path fill="#0a6fc2" d="M0.2 0.3V9.7L5.8 5z"/></svg><i class="sep" style="left:573px;top:1011px;height:26px"></i><b class="sbl" style="left:581px;top:1010px;width:23px;height:24px"></b><b class="sbr" style="left:664px;top:1010px;width:23px;height:24px"></b><span class="fld" style="left:606px;top:1010px;width:58px;height:24px;color:#000;text-indent:4.5px;">10 %</span><svg class="ar" style="left:590.5px;top:1017.6px" width="6" height="10" viewBox="0 0 6 10"><path fill="#0a6fc2" d="M5.8 0.3V9.7L0.2 5z"/></svg><svg class="ar" style="left:673.2px;top:1017.6px" width="6" height="10" viewBox="0 0 6 10"><path fill="#0a6fc2" d="M0.2 0.3V9.7L5.8 5z"/></svg><svg class="ic" style="left:696px;top:1015px" width="18" height="16" viewBox="0 0 18 16"><path d="M1.1 10.8C2.8 8 4.4 5.4 5.9 5.4C8.4 5.4 11.4 14.6 14 14.6C15 14.6 16 13.4 16.8 12.3" fill="none" stroke="#000" stroke-width="1.2"/><path d="M3.4 2V5.6M3.4 3.2H13" stroke="#0c18f8" stroke-width="1.3" fill="none"/><path d="M12.3 1.1L15.1 3.2L12.3 5.4z" fill="#0c18f8"/><path d="M14.5 5.3L16.9 7.7L14.5 10.1L12.1 7.7z" fill="#f8f000" stroke="#303030" stroke-width=".6"/></svg><b class="sbl d" style="left:722px;top:1010px;width:23px;height:24px"></b><b class="sbr d" style="left:805px;top:1010px;width:23px;height:24px"></b><span class="fld fd" style="left:747px;top:1010px;width:58px;height:24px;color:#b8c4d4;text-indent:7.5px;">0 s</span><svg class="ar" style="left:731.5px;top:1017.6px" width="6" height="10" viewBox="0 0 6 10"><path fill="#7db4e0" d="M5.8 0.3V9.7L0.2 5z"/></svg><svg class="ar" style="left:814.2px;top:1017.6px" width="6" height="10" viewBox="0 0 6 10"><path fill="#7db4e0" d="M0.2 0.3V9.7L5.8 5z"/></svg><i class="sep" style="left:835px;top:1011px;height:26px"></i><svg class="jp" style="left:843px;top:1013px" width="68" height="20" viewBox="0 -14 68 20"><text x="0.5" y="0" fill="#000" textLength="64.3" lengthAdjust="spacingAndGlyphs">測定結果(M)</text></svg><svg class="ic" style="left:918.5px;top:1014.5px" width="15" height="15" viewBox="0 0 15 15"><defs><linearGradient id="gg0a5a0a" x1="0" y1="0" x2="0" y2="1"><stop offset="0" stop-color="#58bc3c"/><stop offset="1" stop-color="#108410"/></linearGradient></defs><rect x=".5" y=".5" width="14" height="14" rx="1" fill="url(#gg0a5a0a)" stroke="#0a5a0a" stroke-width="1"/><path d="M7.5 3.2V11.8M3.2 7.5H11.8" stroke="#fff" stroke-width="2.3"/></svg><svg class="ic" style="left:945px;top:1014.5px" width="15" height="15" viewBox="0 0 15 15"><defs><linearGradient id="ggc2d2be" x1="0" y1="0" x2="0" y2="1"><stop offset="0" stop-color="#d6e8d0"/><stop offset="1" stop-color="#b8d6b4"/></linearGradient></defs><rect x=".5" y=".5" width="14" height="14" rx="1" fill="url(#ggc2d2be)" stroke="#c2d2be" stroke-width="1"/><path d="M3.6 7.5H11.4" stroke="#f6faf4" stroke-width="2.3"/></svg><svg class="ic" style="left:971px;top:1014.5px" width="15" height="15" viewBox="0 0 15 15"><defs><linearGradient id="ggc2d2bf" x1="0" y1="0" x2="0" y2="1"><stop offset="0" stop-color="#d6e8d0"/><stop offset="1" stop-color="#b8d6b4"/></linearGradient></defs><rect x=".5" y=".5" width="14" height="14" rx="1" fill="url(#ggc2d2bf)" stroke="#c2d2bf" stroke-width="1"/><path d="M3 10.5L7.5 4.5L12 10.5z" fill="#f6faf4"/></svg><i class="sep" style="left:993px;top:1011px;height:26px"></i><svg class="jp" style="left:1001px;top:1013px" width="36" height="20" viewBox="0 -14 36 20"><text x="0.6" y="0" fill="#000" textLength="32.1" lengthAdjust="spacingAndGlyphs">ルーラー</text></svg><svg class="ic" style="left:1044px;top:1014.5px" width="15" height="15" viewBox="0 0 15 15"><defs><linearGradient id="gg0a5a0b" x1="0" y1="0" x2="0" y2="1"><stop offset="0" stop-color="#58bc3c"/><stop offset="1" stop-color="#108410"/></linearGradient></defs><rect x=".5" y=".5" width="14" height="14" rx="1" fill="url(#gg0a5a0b)" stroke="#0a5a0b" stroke-width="1"/><path d="M2.6 10.6L7.5 4L12.4 10.6z" fill="#fff"/></svg><svg class="jp" style="left:1068.3px;top:1013px" width="26" height="20" viewBox="0 -14 26 20"><text x="0.2" y="0" fill="#000" textLength="22.5" lengthAdjust="spacingAndGlyphs">備考</text></svg><svg class="ic" style="left:1099px;top:1014.5px" width="15" height="15" viewBox="0 0 15 15"><defs><linearGradient id="gg0a5a0b" x1="0" y1="0" x2="0" y2="1"><stop offset="0" stop-color="#58bc3c"/><stop offset="1" stop-color="#108410"/></linearGradient></defs><rect x=".5" y=".5" width="14" height="14" rx="1" fill="url(#gg0a5a0b)" stroke="#0a5a0b" stroke-width="1"/><path d="M2.6 10.6L7.5 4L12.4 10.6z" fill="#fff"/></svg><div id="logo"><span class="pico">pico</span><span class="tech">Technology</span><svg class="ic" style="left:0px;top:0px" width="102" height="62" viewBox="0 0 102 62"><defs><linearGradient id="gw" gradientUnits="userSpaceOnUse" x1="4" y1="0" x2="102" y2="0"><stop offset="0" stop-color="#d4e8f6"/><stop offset=".3" stop-color="#a8c8e6"/><stop offset=".55" stop-color="#7094c0"/><stop offset=".8" stop-color="#44649a"/><stop offset="1" stop-color="#34507c"/></linearGradient></defs><g fill="none" stroke="url(#gw)" stroke-width=".48"><path d="M4.2 47.6L7.5 47.6L9.0 47.5L10.5 47.3L12.0 46.9L13.5 46.3L15.0 45.6L16.5 44.8L18.0 43.9L19.5 42.9L21.0 41.8L22.5 40.8L24.0 39.7L25.5 38.6L27.0 37.6L28.5 36.6L30.0 35.7L31.5 34.9L33.0 34.3L34.5 33.8L36.0 33.4L37.5 33.2L39.0 33.2L40.5 33.3L42.0 33.6L43.5 34.1L45.0 34.7L46.5 35.4L48.0 36.3L49.5 37.2L51.0 38.2L52.5 39.3L54.0 40.4L55.5 41.5L57.0 42.6L58.5 43.6L60.0 44.5L61.5 45.4L63.0 46.1L64.5 46.7L66.0 47.2L67.5 47.5L69.0 47.6L70.5 47.6L72.0 47.4L73.5 47.0L75.0 46.5L76.5 45.9L78.0 45.1L79.5 44.2L81.0 43.2L82.5 42.2L84.0 41.1L85.5 40.0L87.0 39.0L88.5 37.9L90.0 36.9L91.5 36.0L93.0 35.2L94.5 34.5L96.0 33.9L97.5 33.5L99.0 33.3L100.5 33.2L102.0 33.3L103.5 33.5"/><path d="M5.4 47.6L11.3 47.6L12.8 47.5L14.3 47.3L15.8 46.9L17.3 46.3L18.8 45.6L20.3 44.8L21.8 43.9L23.3 42.9L24.8 41.8L26.3 40.8L27.8 39.7L29.3 38.6L30.8 37.6L32.3 36.6L33.8 35.7L35.3 34.9L36.8 34.3L38.3 33.8L39.8 33.4L41.3 33.2L42.8 33.2L44.3 33.3L45.8 33.6L47.3 34.1L48.8 34.7L50.3 35.4L51.8 36.3L53.3 37.2L54.8 38.2L56.3 39.3L57.8 40.4L59.3 41.5L60.8 42.6L62.3 43.6L63.8 44.5L65.3 45.4L66.8 46.1L68.3 46.7L69.8 47.2L71.3 47.5L72.8 47.6L74.3 47.6L75.8 47.4L77.3 47.0L78.8 46.5L80.3 45.9L81.8 45.1L83.3 44.2L84.8 43.2L86.3 42.2L87.8 41.1L89.3 40.0L90.8 39.0L92.3 37.9L93.8 36.9L95.3 36.0L96.8 35.2L98.3 34.5L99.8 33.9L101.3 33.5L102.8 33.3"/><path d="M6.6 47.6L15.1 47.6L16.6 47.5L18.1 47.3L19.6 46.9L21.1 46.3L22.6 45.6L24.1 44.8L25.6 43.9L27.1 42.9L28.6 41.8L30.1 40.8L31.6 39.7L33.1 38.6L34.6 37.6L36.1 36.6L37.6 35.7L39.1 34.9L40.6 34.3L42.1 33.8L43.6 33.4L45.1 33.2L46.6 33.2L48.1 33.3L49.6 33.6L51.1 34.1L52.6 34.7L54.1 35.4L55.6 36.3L57.1 37.2L58.6 38.2L60.1 39.3L61.6 40.4L63.1 41.5L64.6 42.6L66.1 43.6L67.6 44.5L69.1 45.4L70.6 46.1L72.1 46.7L73.6 47.2L75.1 47.5L76.6 47.6L78.1 47.6L79.6 47.4L81.1 47.0L82.6 46.5L84.1 45.9L85.6 45.1L87.1 44.2L88.6 43.2L90.1 42.2L91.6 41.1L93.1 40.0L94.6 39.0L96.1 37.9L97.6 36.9L99.1 36.0L100.6 35.2L102.1 34.5L103.6 33.9"/><path d="M7.8 47.6L18.9 47.6L20.4 47.5L21.9 47.3L23.4 46.9L24.9 46.3L26.4 45.6L27.9 44.8L29.4 43.9L30.9 42.9L32.4 41.8L33.9 40.8L35.4 39.7L36.9 38.6L38.4 37.6L39.9 36.6L41.4 35.7L42.9 34.9L44.4 34.3L45.9 33.8L47.4 33.4L48.9 33.2L50.4 33.2L51.9 33.3L53.4 33.6L54.9 34.1L56.4 34.7L57.9 35.4L59.4 36.3L60.9 37.2L62.4 38.2L63.9 39.3L65.4 40.4L66.9 41.5L68.4 42.6L69.9 43.6L71.4 44.5L72.9 45.4L74.4 46.1L75.9 46.7L77.4 47.2L78.9 47.5L80.4 47.6L81.9 47.6L83.4 47.4L84.9 47.0L86.4 46.5L87.9 45.9L89.4 45.1L90.9 44.2L92.4 43.2L93.9 42.2L95.4 41.1L96.9 40.0L98.4 39.0L99.9 37.9L101.4 36.9L102.9 36.0"/><path d="M9.0 47.6L22.7 47.6L24.2 47.5L25.7 47.3L27.2 46.9L28.7 46.3L30.2 45.6L31.7 44.8L33.2 43.9L34.7 42.9L36.2 41.8L37.7 40.8L39.2 39.7L40.7 38.6L42.2 37.6L43.7 36.6L45.2 35.7L46.7 34.9L48.2 34.3L49.7 33.8L51.2 33.4L52.7 33.2L54.2 33.2L55.7 33.3L57.2 33.6L58.7 34.1L60.2 34.7L61.7 35.4L63.2 36.3L64.7 37.2L66.2 38.2L67.7 39.3L69.2 40.4L70.7 41.5L72.2 42.6L73.7 43.6L75.2 44.5L76.7 45.4L78.2 46.1L79.7 46.7L81.2 47.2L82.7 47.5L84.2 47.6L85.7 47.6L87.2 47.4L88.7 47.0L90.2 46.5L91.7 45.9L93.2 45.1L94.7 44.2L96.2 43.2L97.7 42.2L99.2 41.1L100.7 40.0L102.2 39.0L103.7 37.9"/><path d="M10.2 47.6L26.5 47.6L28.0 47.5L29.5 47.3L31.0 46.9L32.5 46.3L34.0 45.6L35.5 44.8L37.0 43.9L38.5 42.9L40.0 41.8L41.5 40.8L43.0 39.7L44.5 38.6L46.0 37.6L47.5 36.6L49.0 35.7L50.5 34.9L52.0 34.3L53.5 33.8L55.0 33.4L56.5 33.2L58.0 33.2L59.5 33.3L61.0 33.6L62.5 34.1L64.0 34.7L65.5 35.4L67.0 36.3L68.5 37.2L70.0 38.2L71.5 39.3L73.0 40.4L74.5 41.5L76.0 42.6L77.5 43.6L79.0 44.5L80.5 45.4L82.0 46.1L83.5 46.7L85.0 47.2L86.5 47.5L88.0 47.6L89.5 47.6L91.0 47.4L92.5 47.0L94.0 46.5L95.5 45.9L97.0 45.1L98.5 44.2L100.0 43.2L101.5 42.2L103.0 41.1"/><path d="M11.4 47.6L30.3 47.6L31.8 47.5L33.3 47.3L34.8 46.9L36.3 46.3L37.8 45.6L39.3 44.8L40.8 43.9L42.3 42.9L43.8 41.8L45.3 40.8L46.8 39.7L48.3 38.6L49.8 37.6L51.3 36.6L52.8 35.7L54.3 34.9L55.8 34.3L57.3 33.8L58.8 33.4L60.3 33.2L61.8 33.2L63.3 33.3L64.8 33.6L66.3 34.1L67.8 34.7L69.3 35.4L70.8 36.3L72.3 37.2L73.8 38.2L75.3 39.3L76.8 40.4L78.3 41.5L79.8 42.6L81.3 43.6L82.8 44.5L84.3 45.4L85.8 46.1L87.3 46.7L88.8 47.2L90.3 47.5L91.8 47.6L93.3 47.6L94.8 47.4L96.3 47.0L97.8 46.5L99.3 45.9L100.8 45.1L102.3 44.2L103.8 43.2"/><path d="M12.6 47.6L34.1 47.6L35.6 47.5L37.1 47.3L38.6 46.9L40.1 46.3L41.6 45.6L43.1 44.8L44.6 43.9L46.1 42.9L47.6 41.8L49.1 40.8L50.6 39.7L52.1 38.6L53.6 37.6L55.1 36.6L56.6 35.7L58.1 34.9L59.6 34.3L61.1 33.8L62.6 33.4L64.1 33.2L65.6 33.2L67.1 33.3L68.6 33.6L70.1 34.1L71.6 34.7L73.1 35.4L74.6 36.3L76.1 37.2L77.6 38.2L79.1 39.3L80.6 40.4L82.1 41.5L83.6 42.6L85.1 43.6L86.6 44.5L88.1 45.4L89.6 46.1L91.1 46.7L92.6 47.2L94.1 47.5L95.6 47.6L97.1 47.6L98.6 47.4L100.1 47.0L101.6 46.5L103.1 45.9"/></g></svg></div></div></body></html>
